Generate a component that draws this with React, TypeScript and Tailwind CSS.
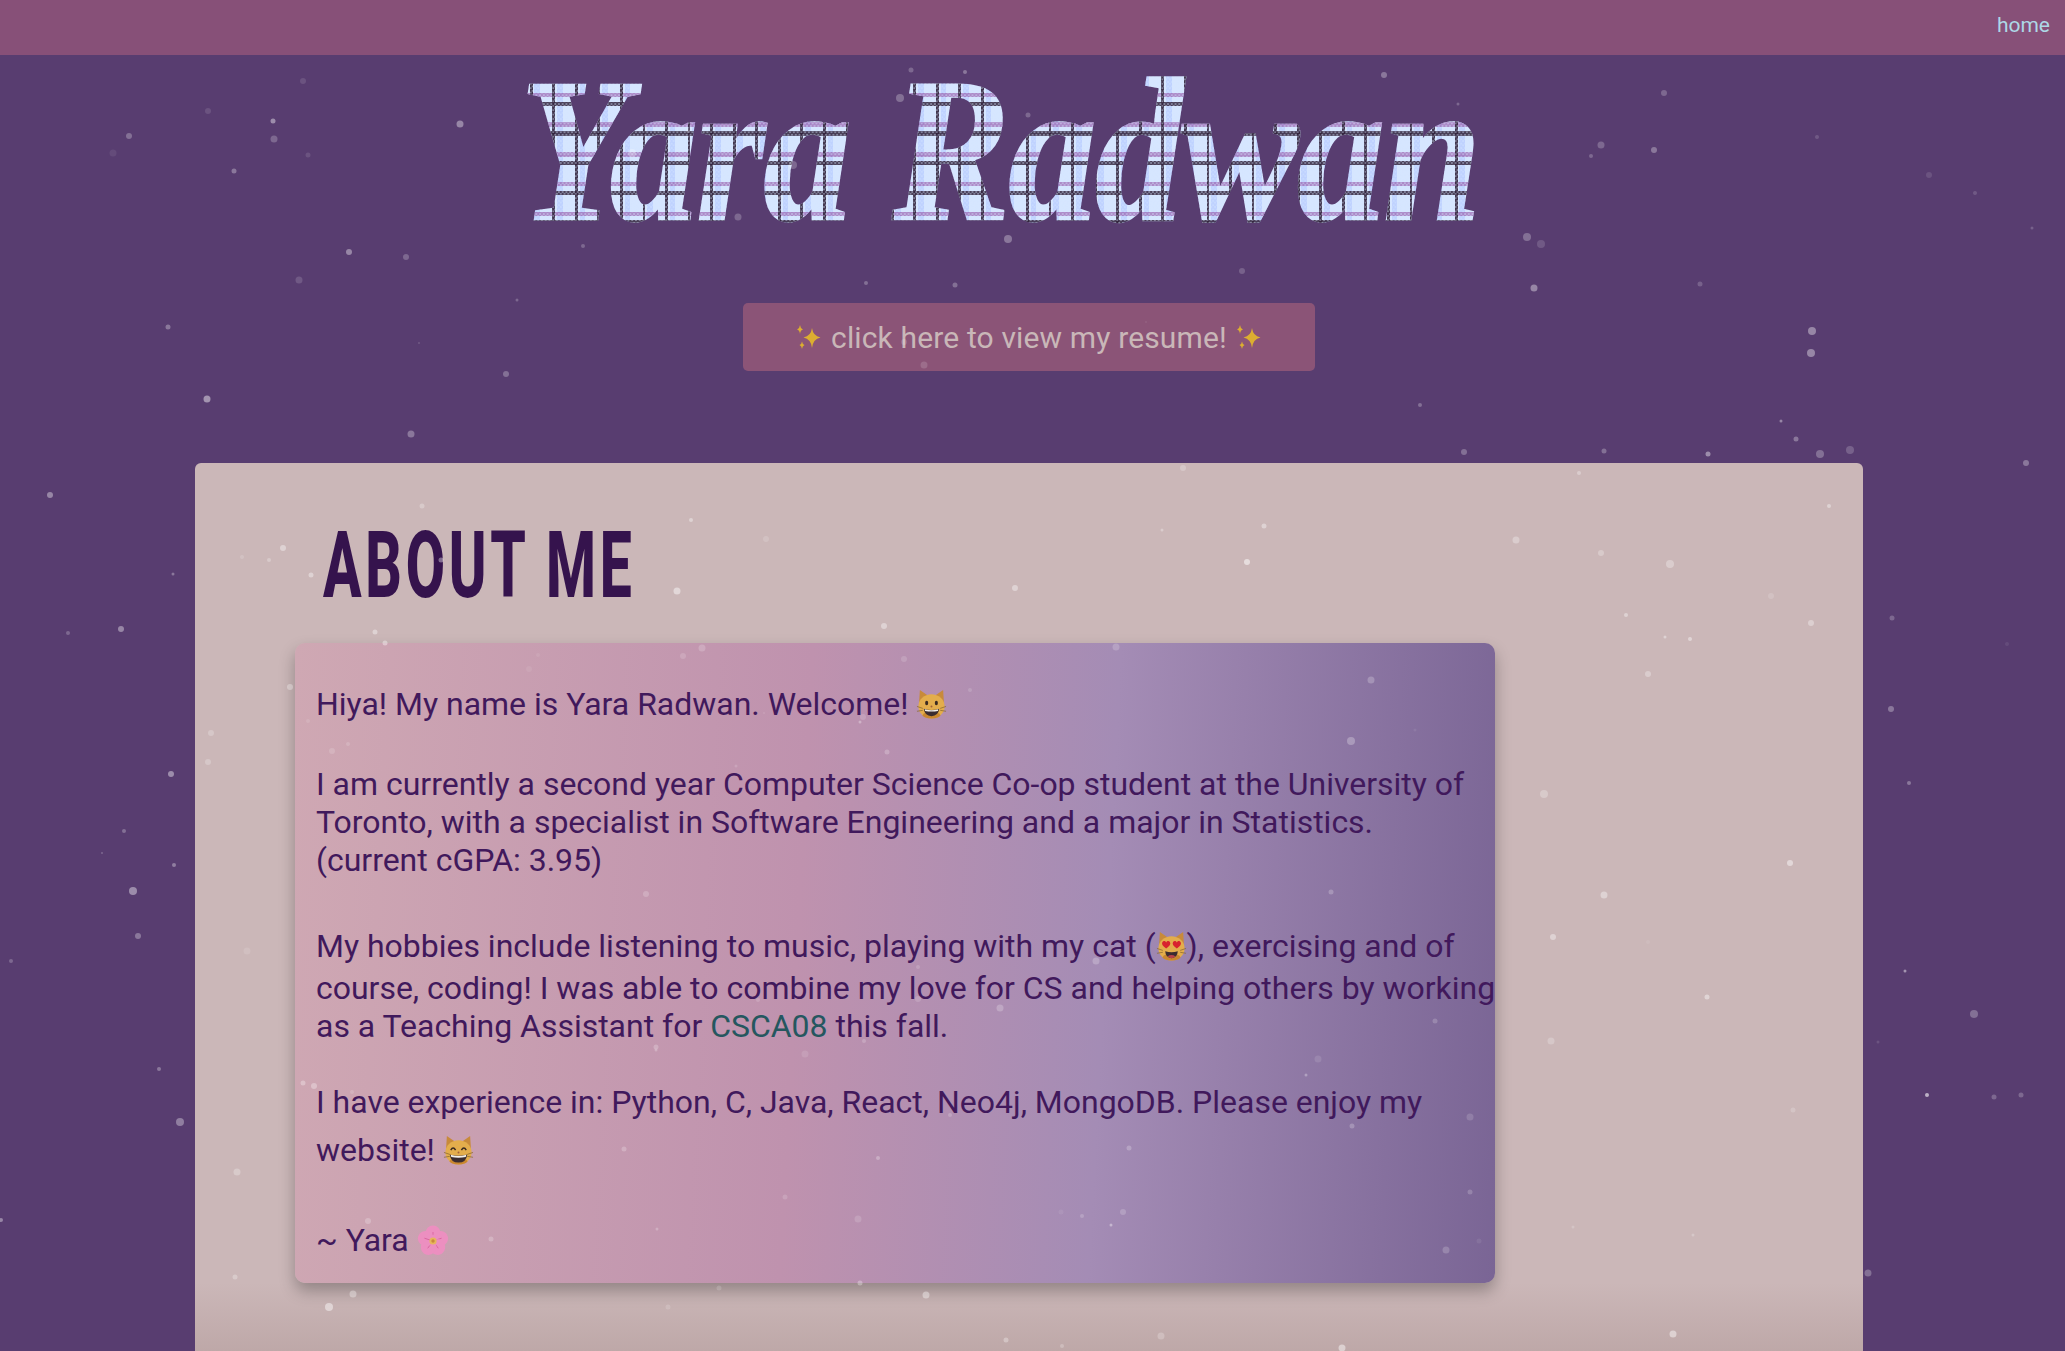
const dots: [number, number, number, number][] = [
  [303, 81, 3, 0.15], [208, 111, 3, 0.15], [273, 121, 2.5, 0.55], [129, 136, 3, 0.35], [274, 139, 3.5, 0.3],
  [113, 153, 3.5, 0.1], [308, 155, 2.5, 0.15], [234, 171, 2.5, 0.4], [460, 124, 3.5, 0.5], [349, 252, 3, 0.5],
  [406, 257, 3, 0.3], [299, 280, 3.5, 0.2], [517, 300, 1.5, 0.3], [168, 327, 2.5, 0.4], [419, 343, 1, 0.2],
  [506, 374, 3, 0.35], [207, 399, 3.5, 0.6], [411, 434, 3.5, 0.4], [1458, 104, 1.5, 0.3], [1664, 93, 3, 0.3],
  [1601, 145, 3.5, 0.3], [1591, 156, 2, 0.3], [1654, 150, 3, 0.4], [1817, 137, 2, 0.2], [1929, 175, 3, 0.15],
  [1975, 193, 2, 0.2], [2032, 228, 1.5, 0.25], [1527, 237, 4, 0.35], [1541, 244, 4, 0.2], [1534, 288, 3.5, 0.5],
  [1700, 284, 2.5, 0.25], [1812, 331, 4, 0.5], [1811, 353, 4, 0.5], [1420, 405, 2, 0.35], [1781, 421, 1.5, 0.5],
  [1796, 439, 2.5, 0.4], [1850, 450, 4, 0.25], [1820, 454, 4, 0.35], [1708, 454, 2.5, 0.55], [1604, 451, 2.5, 0.35],
  [1464, 452, 3, 0.35], [2026, 463, 3, 0.4], [911, 70, 2.5, 0.3], [965, 72, 2, 0.4], [1384, 75, 3, 0.4],
  [900, 98, 4, 0.35], [1028, 115, 2.5, 0.3], [688, 131, 2, 0.3], [632, 153, 4, 0.35], [793, 165, 4, 0.3],
  [779, 198, 2, 0.3], [738, 217, 3.5, 0.3], [1008, 239, 4, 0.4], [583, 246, 2, 0.3], [1242, 271, 3, 0.25],
  [866, 283, 2, 0.35], [955, 285, 2.5, 0.35], [924, 365, 3.5, 0.2], [1146, 322, 1, 0.1], [904, 342, 3, 0.2],
  [50, 495, 3, 0.5], [173, 574, 1.5, 0.4], [68, 633, 2, 0.3], [121, 629, 3, 0.5], [171, 774, 3, 0.55],
  [124, 831, 2, 0.35], [102, 853, 1, 0.3], [174, 865, 2, 0.45], [133, 891, 4, 0.55], [138, 936, 3, 0.4],
  [11, 961, 2, 0.3], [159, 1069, 2, 0.4], [180, 1122, 4, 0.45], [1, 1220, 2, 0.5], [283, 548, 3, 0.5],
  [269, 560, 2, 0.35], [242, 557, 2, 0.2], [290, 687, 3, 0.4], [211, 733, 3, 0.3], [208, 762, 3, 0.3],
  [247, 951, 3.5, 0.15], [237, 1172, 3.5, 0.35], [235, 1277, 2.5, 0.35], [1579, 473, 2, 0.4], [1829, 506, 2, 0.5],
  [1516, 540, 3.5, 0.4], [1601, 553, 3, 0.35], [1670, 564, 4, 0.4], [1771, 596, 3, 0.2], [1626, 615, 2, 0.5],
  [1811, 623, 3, 0.45], [1665, 637, 1.5, 0.5], [1690, 639, 2, 0.55], [1648, 674, 3, 0.4], [1544, 794, 4, 0.35],
  [1790, 863, 3, 0.6], [1604, 895, 3.5, 0.5], [1553, 937, 3, 0.5], [1648, 942, 2, 0.1], [1707, 997, 2.5, 0.55],
  [1551, 1041, 3.5, 0.3], [1793, 1110, 2.5, 0.25], [1573, 1227, 1.5, 0.25], [1693, 1235, 1.5, 0.3], [1673, 1334, 3.5, 0.6],
  [1892, 618, 2.5, 0.3], [2007, 644, 2, 0.1], [1891, 709, 3, 0.4], [1909, 783, 2, 0.4], [1905, 971, 1.5, 0.6],
  [1974, 1014, 4, 0.35], [1878, 1042, 1.5, 0.15], [1927, 1095, 2, 0.8], [1994, 1097, 2.5, 0.3], [2021, 1095, 2.5, 0.3],
  [1868, 1273, 3.5, 0.35], [918, 967, 2, 0.2], [1096, 961, 3.5, 0.3], [918, 999, 3, 0.2], [1000, 1008, 3.5, 0.3],
  [1435, 1021, 2.5, 0.25], [1318, 1059, 3.5, 0.15], [1306, 1075, 1.5, 0.4], [950, 1115, 2, 0.25], [1352, 1126, 2.5, 0.3],
  [1470, 1117, 3.5, 0.2], [1129, 1148, 2.5, 0.3], [1470, 1192, 2.5, 0.25], [1061, 1212, 2.5, 0.1], [1082, 1216, 2, 0.25],
  [1123, 1212, 3, 0.25], [1111, 1225, 1.5, 0.5], [1446, 1250, 3.5, 0.25], [1479, 1241, 2.5, 0.1], [926, 1295, 3.5, 0.5],
  [1006, 1340, 2.5, 0.4], [1161, 1336, 3.5, 0.3], [1062, 1346, 2, 0.3], [1342, 1348, 3.5, 0.6], [1183, 468, 3, 0.3],
  [1162, 530, 1.5, 0.4], [1264, 526, 2.5, 0.5], [1247, 562, 3, 0.7], [1015, 588, 3, 0.5], [884, 626, 3, 0.5],
  [1116, 647, 3.5, 0.25], [904, 659, 3, 0.2], [970, 690, 2, 0.2], [1371, 680, 3.5, 0.3], [1351, 741, 4, 0.35],
  [1415, 730, 1.5, 0.1], [887, 752, 2.5, 0.3], [1331, 892, 2.5, 0.3], [422, 506, 2.5, 0.35], [691, 520, 2, 0.5],
  [766, 539, 3, 0.2], [441, 560, 2.5, 0.5], [311, 575, 2.5, 0.5], [677, 591, 3.5, 0.6], [375, 632, 2.5, 0.5],
  [385, 643, 2.5, 0.5], [702, 648, 3.5, 0.25], [683, 656, 3, 0.2], [538, 655, 2, 0.1], [529, 669, 3, 0.1],
  [863, 717, 3, 0.2], [860, 722, 1.5, 0.4], [308, 721, 2, 0.15], [764, 713, 1, 0.15], [348, 744, 2, 0.2],
  [332, 751, 3, 0.2], [303, 1083, 2.5, 0.4], [314, 1086, 3, 0.4], [352, 1092, 2, 0.2], [656, 1050, 1.5, 0.3],
  [624, 1149, 2.5, 0.3], [368, 1221, 3, 0.3], [491, 1239, 2.5, 0.3], [657, 1229, 1.5, 0.3], [353, 1294, 3.5, 0.45],
  [329, 1307, 4, 0.6], [719, 1288, 2.5, 0.2], [668, 1307, 2.5, 0.2], [736, 766, 1.5, 0.2], [646, 894, 3, 0.25],
  [758, 1000, 2, 0.2], [656, 1047, 2.5, 0.3], [805, 1054, 3.5, 0.15], [864, 1041, 2, 0.25], [878, 1158, 2, 0.35],
  [785, 1197, 2.5, 0.2], [858, 1219, 3.5, 0.2], [860, 1283, 2.5, 0.4],
]

function Particles() {
  return (
    <svg className="pointer-events-none absolute inset-0 z-20 h-full w-full">
      {dots.map(([x, y, r, a]) => (
        <circle key={`${x}-${y}`} cx={x} cy={y} r={r} fill="#ffffff" fillOpacity={a * 0.75} />
      ))}
    </svg>
  )
}

function CatHead({ children }: { children: React.ReactNode }) {
  return (
    <svg viewBox="0 0 32 32" className="inline-block h-[31px] w-[31px] align-[-5px]">
      <path d="M4 1 L14 8 L3 17 Z" fill="#c88a3a" />
      <path d="M28 1 L18 8 L29 17 Z" fill="#c88a3a" />
      <ellipse cx="16" cy="18" rx="13.5" ry="12.5" fill="#e3ad4c" />
      <ellipse cx="16" cy="27" rx="9" ry="3.5" fill="#c9872f" />
      <path d="M1 18 L7 20 M1 23 L7 22 M31 18 L25 20 M31 23 L25 22" stroke="#8a6a30" strokeWidth="0.8" />
      {children}
    </svg>
  )
}

function GrinCat() {
  return (
    <CatHead>
      <ellipse cx="11" cy="14.5" rx="1.6" ry="2.4" fill="#3a2a20" />
      <ellipse cx="21" cy="14.5" rx="1.6" ry="2.4" fill="#3a2a20" />
      <circle cx="16" cy="18" r="1" fill="#a0603a" />
      <path d="M8 20.5 Q16 23 24 20.5 Q23 28 16 28 Q9 28 8 20.5 Z" fill="#3a2c30" />
      <path d="M9 20.9 Q16 23 23 20.9 L22.6 22.6 Q16 24 9.4 22.6 Z" fill="#f4f0ea" />
    </CatHead>
  )
}

function SmileCat() {
  return (
    <CatHead>
      <path d="M8 15.5 Q10.5 11.5 13 15.5 M19 15.5 Q21.5 11.5 24 15.5" stroke="#3a2a20" strokeWidth="1.5" fill="none" />
      <circle cx="16" cy="18" r="1" fill="#a0603a" />
      <path d="M7 20 Q16 23 25 20 Q24 28.5 16 28.5 Q8 28.5 7 20 Z" fill="#3a2c30" />
      <path d="M8 20.4 Q16 23 24 20.4 L23.5 22.6 Q16 24.2 8.5 22.6 Z" fill="#f4f0ea" />
    </CatHead>
  )
}

function HeartCat() {
  return (
    <CatHead>
      <path d="M10.5 18 C7 15.5 5.5 13.5 6.5 11.5 C7.5 10 9.5 10 10.5 11.8 C11.5 10 13.5 10 14.5 11.5 C15.5 13.5 14 15.5 10.5 18 Z" fill="#d8232f" />
      <path d="M21.5 18 C18 15.5 16.5 13.5 17.5 11.5 C18.5 10 20.5 10 21.5 11.8 C22.5 10 24.5 10 25.5 11.5 C26.5 13.5 25 15.5 21.5 18 Z" fill="#d8232f" />
      <path d="M9.5 21 Q16 23 22.5 21 Q22 28 16 28 Q10 28 9.5 21 Z" fill="#3a2c30" />
      <path d="M12 26 Q16 23.5 20 26 Q18 28 16 28 Q14 28 12 26 Z" fill="#b8434a" />
    </CatHead>
  )
}

function Blossom() {
  const petals = [0, 72, 144, 216, 288]
  return (
    <svg viewBox="0 0 32 32" className="inline-block h-[32px] w-[32px] align-[-6px]">
      {petals.map((a) => (
        <g key={a} transform={`rotate(${a} 16 16)`}>
          <ellipse cx="16" cy="8.5" rx="7.6" ry="8" fill="#ec8fc0" />
          <path d="M16 13 L16 7" stroke="#d0508f" strokeWidth="0.6" />
        </g>
      ))}
      <circle cx="16" cy="16" r="3.6" fill="#e7b65c" />
      <circle cx="16" cy="16" r="1.7" fill="#c98a3c" />
    </svg>
  )
}

function Sparkles() {
  return (
    <svg viewBox="0 0 26 24" className="inline-block h-[24px] w-[26px] align-[-3px]">
      <path d="M16 3 Q17 11 24.5 12.5 Q17 14 16 23 Q15 14 7.5 12.5 Q15 11 16 3 Z" fill="#dcae30" />
      <path d="M4 0 Q4.4 3.6 7 4.6 Q4.4 5.4 4 9 Q3.6 5.4 1 4.6 Q3.6 3.6 4 0 Z" fill="#dcae30" />
      <path d="M6 16.5 Q6.3 19 8.5 20 Q6.3 20.8 6 24 Q5.7 20.8 3.5 20 Q5.7 19 6 16.5 Z" fill="#dcae30" />
    </svg>
  )
}

export default function App() {
  return (
    <div className="relative h-[1351px] overflow-hidden bg-[#583d70] font-['Roboto',sans-serif]">
      <Particles />

      <nav className="flex h-[55px] items-center justify-end bg-[#875078] pr-[15px] pb-[4px]">
        <a href="#home" className="text-[21px] text-[#add8e6]">
          home
        </a>
      </nav>

      <header className="flex h-[248px] justify-center pr-[42px]">
        <h1 className="mt-[-30px] h-[250px] origin-center scale-x-[0.94] scale-y-[1.1] bg-clip-text pr-6 font-['Liberation_Serif',serif] text-[186px] leading-[250px] font-bold italic tracking-[-1px] text-transparent [-webkit-text-stroke:3px_transparent] [background-image:repeating-conic-gradient(#d6e6ff66_0_25%,transparent_0_50%),repeating-linear-gradient(90deg,transparent_0_10px,rgba(50,35,60,0.9)_10px_13px,transparent_13px_24px),repeating-linear-gradient(0deg,transparent_0_3px,rgba(50,35,60,0.85)_3px_7px,transparent_7px_11px,rgba(150,90,170,0.65)_11px_15px,transparent_15px_27px),repeating-linear-gradient(90deg,#d6e6ff_0_15px,#bfd2ff_15px_21px,#d6e6ff_21px_24px)] [background-size:4px_4px,auto,auto,auto]">
          Yara Radwan
        </h1>
      </header>

      <a
        href="#resume"
        className="ml-[743px] flex h-[68px] w-[572px] items-center justify-center gap-[9px] rounded-[5px] bg-[#8b5477] text-[30px] tracking-[0.14px] text-[#c9b7b8]"
      >
        <Sparkles />
        click here to view my resume!
        <Sparkles />
      </a>

      <main className="mt-[92px] ml-[195px] h-[1000px] w-[1668px] rounded-[6px] bg-[linear-gradient(to_bottom,#cbb7b8_820px,#bea8a8_888px)] pl-[100px]">
        <div className="h-[180px] pt-[48px]">
          <h2 className="ml-[28px] origin-left scale-x-[0.62] text-[92px] leading-[110px] font-extrabold tracking-[6px] whitespace-nowrap text-[#35134d]">
            ABOUT ME
          </h2>
        </div>

        <section className="h-[640px] w-[1200px] rounded-[10px] bg-[linear-gradient(93deg,#cfa8b3_0%,#bf92ae_42%,#a48cb5_67%,#7a6595_100%)] pt-[42px] pl-[21px] text-[31.97px] leading-[38px] whitespace-nowrap text-[#41195c] shadow-[0_8px_16px_rgba(0,0,0,0.28)]">
          <p>
            Hiya! My name is Yara Radwan. Welcome! <GrinCat />
          </p>
          <p className="mt-[42px]">
            <span className="block">I am currently a second year Computer Science Co-op student at the University of</span>
            <span className="block">Toronto, with a specialist in Software Engineering and a major in Statistics.</span>
            <span className="block">(current cGPA: 3.95)</span>
          </p>
          <p className="mt-[48px]">
            <span className="mb-[4px] block">
              My hobbies include listening to music, playing with my cat (<HeartCat />), exercising and of
            </span>
            <span className="block">course, coding! I was able to combine my love for CS and helping others by working</span>
            <span className="block">
              as a Teaching Assistant for <a href="#csca08" className="text-[#25575f]">CSCA08</a> this fall.
            </span>
          </p>
          <p className="mt-[38px]">
            <span className="mb-[10px] block">I have experience in: Python, C, Java, React, Neo4j, MongoDB. Please enjoy my</span>
            <span className="block">
              website! <SmileCat />
            </span>
          </p>
          <p className="mt-[52px]">
            ~ Yara <Blossom />
          </p>
        </section>
      </main>
    </div>
  )
}
